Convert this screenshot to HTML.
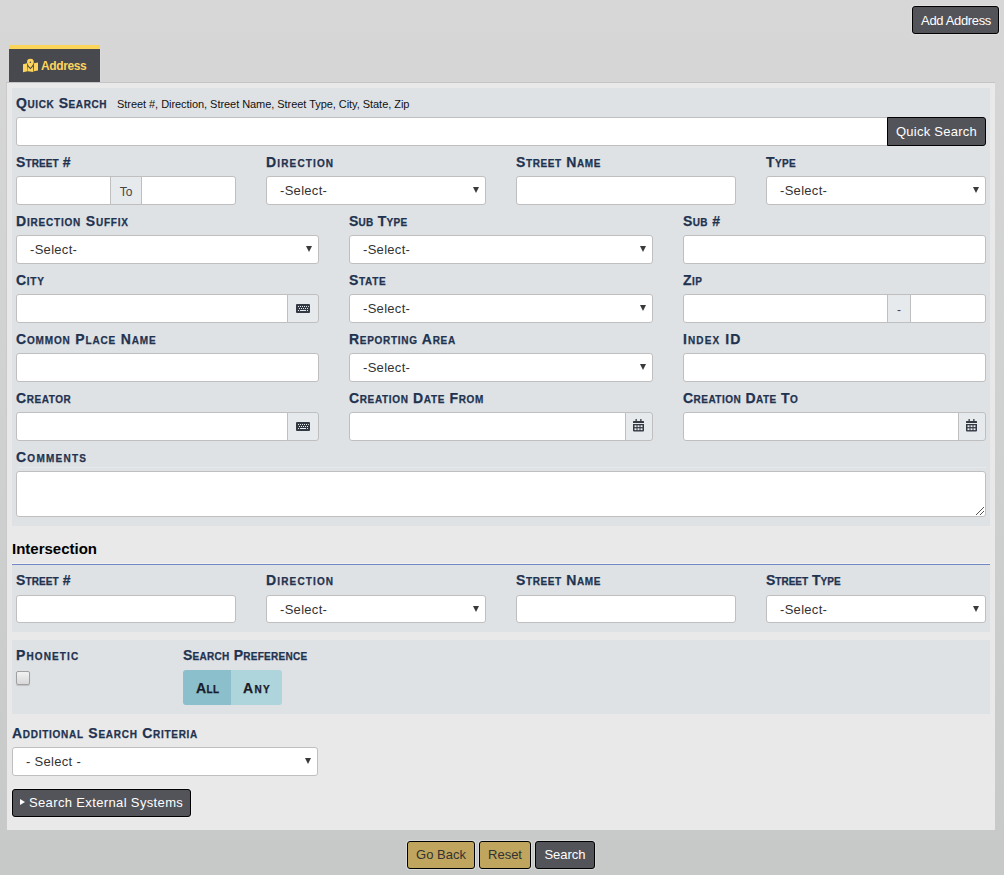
<!DOCTYPE html>
<html><head><meta charset="utf-8">
<style>
*{box-sizing:border-box;margin:0;padding:0}
html,body{width:1004px;height:875px;overflow:hidden}
body{position:relative;font-family:"Liberation Sans",sans-serif;background:linear-gradient(#d7d7d7 0px,#c7c9c9 875px)}
.abs{position:absolute}
.bd{position:absolute;background:#535459;border:1px solid #000;border-radius:3px;color:#fff;font-size:13px;line-height:26px;text-align:center;white-space:nowrap;box-shadow:0 0 0 1px rgba(255,255,255,.22)}
.bg{position:absolute;background:#bfa55d;border:1px solid #000;border-radius:3px;color:#333;font-size:13px;line-height:26px;text-align:center;white-space:nowrap;box-shadow:0 0 0 1px rgba(255,255,255,.3)}
.panel{position:absolute;left:6px;top:82px;width:989px;height:748px;background:#e9e9e9;border-top:1px solid #c4c4c4;border-left:1px solid #cacaca}
.inner{position:absolute;background:#dfe2e5}
.lbl{position:absolute;font-weight:bold;font-variant:small-caps;font-size:14px;letter-spacing:0.4px;color:#1f3350;line-height:16px;white-space:nowrap;-webkit-text-stroke:0.25px}
.inp{position:absolute;background:#fff;border:1px solid #bfbfbf;border-radius:3px;height:29px}
.sel{position:absolute;background:#fff;border:1px solid #bfbfbf;border-radius:3px;height:29px;font-size:13px;letter-spacing:0.3px;color:#333;line-height:27px;padding-left:13px;white-space:nowrap}
.sel i{position:absolute;right:6px;top:10px;width:0;height:0;border-left:3px solid transparent;border-right:3px solid transparent;border-top:6px solid #3a3a3a}
.addon{position:absolute;background:#e7eaed;border:1px solid #bfbfbf;height:29px;font-size:12px;color:#444;line-height:30px;text-align:center}
.addon svg{position:absolute}
</style></head><body>
<div class="bd" style="left:912px;top:6px;width:87px;height:28px;line-height:28px;letter-spacing:-0.35px;padding-left:1px">Add Address</div>
<div class="abs" style="left:9px;top:45px;width:91px;height:37px;background:#48494e;border-top:4px solid #fbd55a;"></div>
<div class="abs" style="left:100px;top:49px;width:1px;height:33px;background:#dadada"></div>
<svg class="abs" style="left:23px;top:58px" width="16" height="15" viewBox="0 0 16 15"><g fill="#fdd45c"><path d="M7.4 0.8a3.4 3.4 0 0 0-3.4 3.4c0 1.6 2.2 4.3 3.4 5.6c1.2-1.3 3.4-4 3.4-5.6a3.4 3.4 0 0 0-3.4-3.4zm0 2.6a0.8 0.8 0 1 1 0 1.6a0.8 0.8 0 1 1 0-1.6z"/><path d="M0 6.2L4 5.2L4.6 13.2L0 14.2z"/><path d="M4.8 8.6c0.9 1.2 1.8 2.1 2.6 2.7c0.8-0.6 1.7-1.5 2.6-2.7L10.4 14L4.8 13.2z"/><path d="M10.9 5.2L15 4.6L15 12.6L10.9 13.2z"/></g></svg><div class="abs" style="left:41px;top:59px;font-weight:bold;font-size:12px;letter-spacing:-0.4px;color:#fdd45c;line-height:14px">Address</div>
<div class="panel"></div>
<div class="inner" style="left:12px;top:88px;width:978px;height:438px"></div>
<div class="lbl" style="left:16px;top:95px;letter-spacing:0.58px;">Quick Search</div>
<div class="abs" style="left:117px;top:98px;font-size:11px;letter-spacing:-0.05px;color:#111;line-height:12px;white-space:nowrap">Street #, Direction, Street Name, Street Type, City, State, Zip</div>
<div class="inp" style="left:16px;top:117px;width:872px;border-radius:3px 0 0 3px"></div>
<div class="bd" style="left:887px;top:117px;width:99px;height:29px;border-radius:0 3px 3px 0;line-height:27px;box-shadow:none;letter-spacing:0.25px">Quick Search</div>
<div class="lbl" style="left:16px;top:154px;letter-spacing:0.11px;">Street #</div>
<div class="lbl" style="left:266px;top:154px;letter-spacing:1.15px;">Direction</div>
<div class="lbl" style="left:516px;top:154px;letter-spacing:0.60px;">Street Name</div>
<div class="lbl" style="left:766px;top:154px;letter-spacing:0.40px;">Type</div>
<div class="inp" style="left:16px;top:176px;width:95px;border-radius:3px 0 0 3px"></div>
<div class="addon" style="left:110px;top:176px;width:32px;">To</div>
<div class="inp" style="left:141px;top:176px;width:95px;border-radius:0 3px 3px 0"></div>
<div class="sel" style="left:266px;top:176px;width:220px;">-Select-<i></i></div>
<div class="inp" style="left:516px;top:176px;width:220px;"></div>
<div class="sel" style="left:766px;top:176px;width:220px;">-Select-<i></i></div>
<div class="lbl" style="left:16px;top:213px;letter-spacing:0.80px;">Direction Suffix</div>
<div class="lbl" style="left:349px;top:213px;letter-spacing:0.26px;">Sub Type</div>
<div class="lbl" style="left:683px;top:213px;letter-spacing:0.40px;">Sub #</div>
<div class="sel" style="left:16px;top:235px;width:303px;">-Select-<i></i></div>
<div class="sel" style="left:349px;top:235px;width:304px;">-Select-<i></i></div>
<div class="inp" style="left:683px;top:235px;width:303px;"></div>
<div class="lbl" style="left:16px;top:272px;letter-spacing:0.73px;">City</div>
<div class="lbl" style="left:349px;top:272px;letter-spacing:0.65px;">State</div>
<div class="lbl" style="left:683px;top:272px;letter-spacing:0.40px;">Zip</div>
<div class="inp" style="left:16px;top:294px;width:272px;border-radius:3px 0 0 3px"></div>
<div class="addon" style="left:287px;top:294px;width:32px;border-radius:0 3px 3px 0"><svg style="left:8px;top:9px" width="14" height="9" viewBox="0 0 14 9"><rect x="0" y="0" width="14" height="9" rx="1" fill="#343a44"/><g fill="#e8ebee"><rect x="2" y="2" width="1" height="1"/><rect x="4" y="2" width="1" height="1"/><rect x="6" y="2" width="1" height="1"/><rect x="8" y="2" width="1" height="1"/><rect x="10" y="2" width="1" height="1"/><rect x="12" y="2" width="0.8" height="1"/><rect x="3" y="4" width="1" height="1"/><rect x="5" y="4" width="1" height="1"/><rect x="7" y="4" width="1" height="1"/><rect x="9" y="4" width="1" height="1"/><rect x="11" y="4" width="1" height="1"/><rect x="2" y="6" width="1" height="1"/><rect x="4" y="6" width="6" height="1"/><rect x="11" y="6" width="1" height="1"/></g></svg></div>
<div class="sel" style="left:349px;top:294px;width:304px;">-Select-<i></i></div>
<div class="inp" style="left:683px;top:294px;width:205px;border-radius:3px 0 0 3px"></div>
<div class="addon" style="left:887px;top:294px;width:24px;">-</div>
<div class="inp" style="left:910px;top:294px;width:76px;border-radius:0 3px 3px 0"></div>
<div class="lbl" style="left:16px;top:331px;letter-spacing:0.84px;">Common Place Name</div>
<div class="lbl" style="left:349px;top:331px;letter-spacing:0.71px;">Reporting Area</div>
<div class="lbl" style="left:683px;top:331px;letter-spacing:1.11px;">Index ID</div>
<div class="inp" style="left:16px;top:353px;width:303px;"></div>
<div class="sel" style="left:349px;top:353px;width:304px;">-Select-<i></i></div>
<div class="inp" style="left:683px;top:353px;width:303px;"></div>
<div class="lbl" style="left:16px;top:390px;letter-spacing:0.57px;">Creator</div>
<div class="lbl" style="left:349px;top:390px;letter-spacing:0.64px;">Creation Date From</div>
<div class="lbl" style="left:683px;top:390px;letter-spacing:0.47px;">Creation Date To</div>
<div class="inp" style="left:16px;top:412px;width:272px;border-radius:3px 0 0 3px"></div>
<div class="addon" style="left:287px;top:412px;width:32px;border-radius:0 3px 3px 0"><svg style="left:8px;top:9px" width="14" height="9" viewBox="0 0 14 9"><rect x="0" y="0" width="14" height="9" rx="1" fill="#343a44"/><g fill="#e8ebee"><rect x="2" y="2" width="1" height="1"/><rect x="4" y="2" width="1" height="1"/><rect x="6" y="2" width="1" height="1"/><rect x="8" y="2" width="1" height="1"/><rect x="10" y="2" width="1" height="1"/><rect x="12" y="2" width="0.8" height="1"/><rect x="3" y="4" width="1" height="1"/><rect x="5" y="4" width="1" height="1"/><rect x="7" y="4" width="1" height="1"/><rect x="9" y="4" width="1" height="1"/><rect x="11" y="4" width="1" height="1"/><rect x="2" y="6" width="1" height="1"/><rect x="4" y="6" width="6" height="1"/><rect x="11" y="6" width="1" height="1"/></g></svg></div>
<div class="inp" style="left:349px;top:412px;width:277px;border-radius:3px 0 0 3px"></div>
<div class="addon" style="left:625px;top:412px;width:28px;border-radius:0 3px 3px 0"><svg style="left:7px;top:6px" width="11" height="13" viewBox="0 0 11 13"><g fill="#343a44"><rect x="2.5" y="0" width="1.3" height="2"/><rect x="7.2" y="0" width="1.3" height="2"/><rect x="0" y="2" width="11" height="2" rx="0.5"/><path d="M0 5h11v6.5a1 1 0 0 1-1 1H1a1 1 0 0 1-1-1z"/></g><g fill="#e8ebee"><rect x="1.5" y="6.3" width="2" height="1.8"/><rect x="4.5" y="6.3" width="2" height="1.8"/><rect x="7.5" y="6.3" width="2" height="1.8"/><rect x="1.5" y="9.3" width="2" height="1.8"/><rect x="4.5" y="9.3" width="2" height="1.8"/><rect x="7.5" y="9.3" width="2" height="1.8"/></g></svg></div>
<div class="inp" style="left:683px;top:412px;width:276px;border-radius:3px 0 0 3px"></div>
<div class="addon" style="left:958px;top:412px;width:28px;border-radius:0 3px 3px 0"><svg style="left:7px;top:6px" width="11" height="13" viewBox="0 0 11 13"><g fill="#343a44"><rect x="2.5" y="0" width="1.3" height="2"/><rect x="7.2" y="0" width="1.3" height="2"/><rect x="0" y="2" width="11" height="2" rx="0.5"/><path d="M0 5h11v6.5a1 1 0 0 1-1 1H1a1 1 0 0 1-1-1z"/></g><g fill="#e8ebee"><rect x="1.5" y="6.3" width="2" height="1.8"/><rect x="4.5" y="6.3" width="2" height="1.8"/><rect x="7.5" y="6.3" width="2" height="1.8"/><rect x="1.5" y="9.3" width="2" height="1.8"/><rect x="4.5" y="9.3" width="2" height="1.8"/><rect x="7.5" y="9.3" width="2" height="1.8"/></g></svg></div>
<div class="lbl" style="left:16px;top:449px;letter-spacing:1.26px;">Comments</div>
<div class="abs" style="left:18px;top:467px;width:968px;height:1px;background:#e6e9ec"></div>
<div class="inp" style="left:16px;top:471px;width:970px;height:46px"></div>
<svg class="abs" style="left:976px;top:506px" width="9" height="9" viewBox="0 0 9 9"><g stroke="#555" stroke-width="1"><path d="M0 9L8 1"/><path d="M4 9L8 5"/></g></svg>
<div class="abs" style="left:12px;top:540px;font-weight:bold;font-size:15px;color:#000;line-height:17px">Intersection</div>
<div class="abs" style="left:12px;top:563px;width:978px;height:1px;background:#f3f2ef"></div>
<div class="inner" style="left:12px;top:564px;width:978px;height:68px;border-top:1px solid #7089c6"></div>
<div class="lbl" style="left:16px;top:572px;letter-spacing:0.11px;">Street #</div>
<div class="lbl" style="left:266px;top:572px;letter-spacing:1.15px;">Direction</div>
<div class="lbl" style="left:516px;top:572px;letter-spacing:0.60px;">Street Name</div>
<div class="lbl" style="left:766px;top:572px;letter-spacing:0.00px;">Street Type</div>
<div class="inp" style="left:16px;top:595px;width:220px;height:28px"></div>
<div class="sel" style="left:266px;top:595px;width:220px;height:28px">-Select-<i></i></div>
<div class="inp" style="left:516px;top:595px;width:220px;height:28px"></div>
<div class="sel" style="left:766px;top:595px;width:220px;height:28px">-Select-<i></i></div>
<div class="inner" style="left:12px;top:640px;width:978px;height:74px"></div>
<div class="lbl" style="left:16px;top:647px;letter-spacing:1.11px;">Phonetic</div>
<div class="lbl" style="left:183px;top:647px;letter-spacing:0.27px;">Search Preference</div>
<div class="abs" style="left:16px;top:671px;width:14px;height:14px;border:1px solid #a0a0a0;border-radius:2px;background:linear-gradient(#f2f2f2,#d8d8d8);box-shadow:0 1px 1px rgba(0,0,0,.15)"></div>
<div class="abs" style="left:183px;top:670px;width:48px;height:35px;background:#8bbfcb;border-radius:3px 0 0 3px"></div>
<div class="abs" style="left:231px;top:670px;width:51px;height:35px;background:#aed4dc;border-radius:0 3px 3px 0"></div>
<div class="lbl" style="left:196px;top:680px;letter-spacing:0.40px;color:#1a1a28">All</div>
<div class="lbl" style="left:243px;top:680px;letter-spacing:1.30px;color:#1a1a28">Any</div>
<div class="lbl" style="left:12px;top:725px;letter-spacing:0.72px;">Additional Search Criteria</div>
<div class="sel" style="left:12px;top:747px;width:306px;">- Select -<i></i></div>
<div class="bd" style="left:12px;top:789px;width:179px;height:28px;text-align:left;padding-left:16px;letter-spacing:0.36px">Search External Systems</div>
<div class="abs" style="left:20px;top:799px;width:0;height:0;border-top:3.5px solid transparent;border-bottom:3.5px solid transparent;border-left:5px solid #fff"></div>
<div class="bg" style="left:407px;top:841px;width:68px;height:28px">Go Back</div>
<div class="bg" style="left:479px;top:841px;width:52px;height:28px">Reset</div>
<div class="bd" style="left:535px;top:841px;width:60px;height:28px">Search</div>
</body></html>
